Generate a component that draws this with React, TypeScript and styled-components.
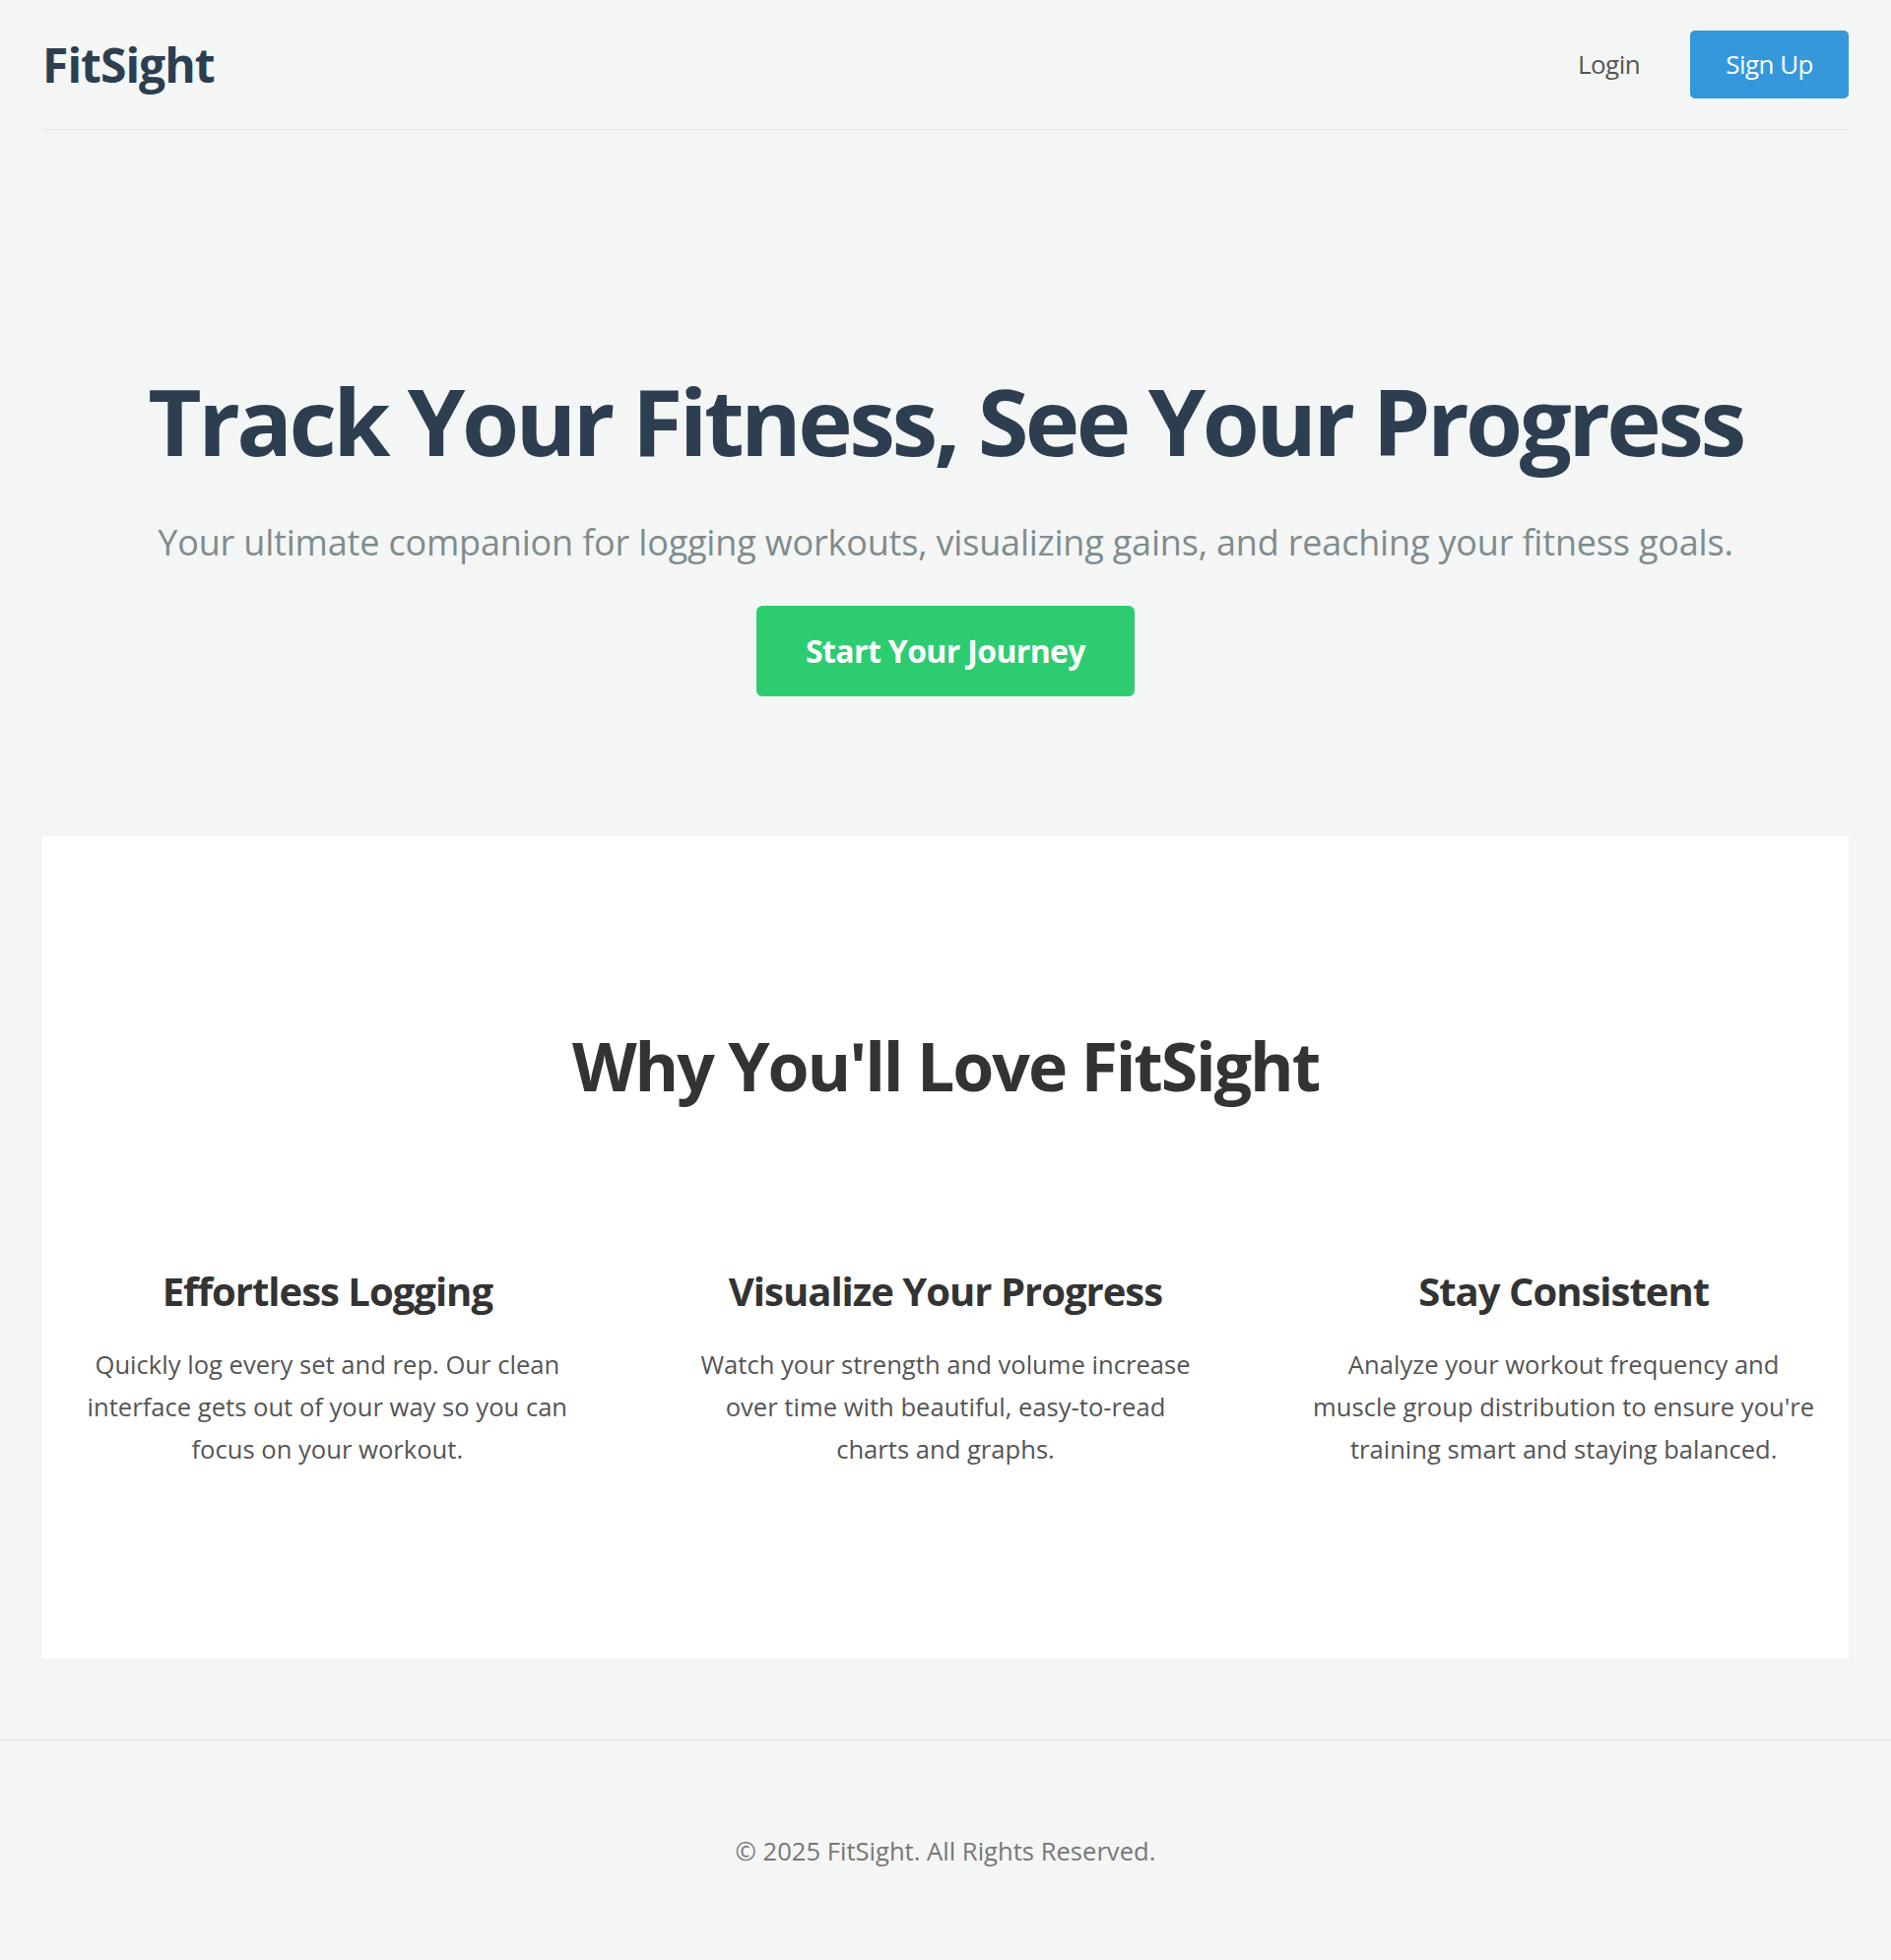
import React from "react";
import styled, { createGlobalStyle } from "styled-components";

const GlobalStyle = createGlobalStyle`
  body {
    margin: 0;
    background: #f4f6f5;
    font-family: "Open Sans", "Noto Sans", sans-serif;
  }
  * { box-sizing: border-box; }
`

const Page = styled.div`
  min-height: 1990px;
  display: flex;
  flex-direction: column;
`

const Container = styled.div`
  margin: 0 43px;
`

const Header = styled.header`
  display: flex;
  justify-content: space-between;
  align-items: center;
  padding: 31px 0 31px;
  border-bottom: 1px solid #e2e5e4;
`

const Logo = styled.div`
  font-size: 48px;
  font-weight: 700;
  color: #2c3e50;
  letter-spacing: -0.02em;
`

const Nav = styled.nav`
  display: flex;
  align-items: center;
  gap: 15px;
`

const NavButton = styled.a<{ $primary?: boolean }>`
  font-size: 26px;
  line-height: 37px;
  padding: 16px 36px;
  border-radius: 5px;
  text-decoration: none;
  cursor: pointer;
  letter-spacing: -0.02em;
  color: ${(p) => (p.$primary ? "#fff" : "#555")};
  background: ${(p) => (p.$primary ? "#3498db" : "transparent")};
`

const Hero = styled.section`
  text-align: center;
  padding: 239px 0 142px;
`

const Title = styled.h1`
  margin: 0;
  font-size: 94px;
  line-height: 1.2;
  font-weight: 700;
  color: #2c3e50;
  letter-spacing: -0.038em;
`

const Subtitle = styled.p`
  margin: 38px 0 36px;
  font-size: 36px;
  line-height: 1.6;
  color: #7f8c8d;
  letter-spacing: -0.005em;
`

const CtaButton = styled.a`
  display: inline-block;
  background: #2ecc71;
  color: #fff;
  font-size: 32px;
  line-height: 38px;
  font-weight: 700;
  padding: 27px 50px;
  border-radius: 6px;
  text-decoration: none;
  letter-spacing: -0.02em;
`

const Features = styled.section`
  background: #fff;
  padding: 192px 0 191px;
  margin-bottom: 80px;
  text-align: center;
`

const FeaturesHeading = styled.h2`
  margin: 0 0 164px;
  font-size: 68px;
  line-height: 1.2;
  font-weight: 700;
  color: #333;
  letter-spacing: -0.031em;
`

const FeatureGrid = styled.div`
  display: grid;
  grid-template-columns: repeat(3, 1fr);
  gap: 49px;
`

const Feature = styled.div`
  padding: 0 31px;
`

const FeatureTitle = styled.h3`
  margin: 0 0 29px;
  font-size: 40px;
  line-height: 1.2;
  font-weight: 700;
  color: #333;
  letter-spacing: -0.025em;
`

const FeatureText = styled.p`
  margin: 0;
  font-size: 25.6px;
  line-height: 43px;
  color: #555;
`

const Footer = styled.footer`
  margin-top: auto;
  border-top: 1px solid #dcdfde;
  padding: 92px 0 90px;
  text-align: center;
  font-size: 25.6px;
  line-height: 41px;
  color: #777;
`

const features = [
  {
    title: "Effortless Logging",
    text: "Quickly log every set and rep. Our clean interface gets out of your way so you can focus on your workout.",
  },
  {
    title: "Visualize Your Progress",
    text: "Watch your strength and volume increase over time with beautiful, easy-to-read charts and graphs.",
  },
  {
    title: "Stay Consistent",
    text: "Analyze your workout frequency and muscle group distribution to ensure you're training smart and staying balanced.",
  },
];

const App = () => (
  <Page>
    <GlobalStyle />
    <Container>
      <Header>
        <Logo>FitSight</Logo>
        <Nav>
          <NavButton>Login</NavButton>
          <NavButton $primary>Sign Up</NavButton>
        </Nav>
      </Header>
      <Hero>
        <Title>Track Your Fitness, See Your Progress</Title>
        <Subtitle>
          Your ultimate companion for logging workouts, visualizing gains, and reaching your fitness goals.
        </Subtitle>
        <CtaButton>Start Your Journey</CtaButton>
      </Hero>
      <Features>
        <FeaturesHeading>Why You'll Love FitSight</FeaturesHeading>
        <FeatureGrid>
          {features.map((f) => (
            <Feature key={f.title}>
              <FeatureTitle>{f.title}</FeatureTitle>
              <FeatureText>{f.text}</FeatureText>
            </Feature>
          ))}
        </FeatureGrid>
      </Features>
    </Container>
    <Footer>© 2025 FitSight. All Rights Reserved.</Footer>
  </Page>
);

export default App;
